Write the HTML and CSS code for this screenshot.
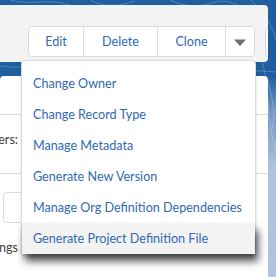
FILE: index.html
```html
<!DOCTYPE html>
<html lang="en">
<head>
    <meta charset="UTF-8">
    <meta name="viewport" content="width=device-width, initial-scale=1.0">
    <title>Record actions</title>
    <link rel="stylesheet" href="styles.css">
</head>
<body>
    <div class="page">
        <div class="highlights">
            <div class="btn-group">
                <button class="btn btn-edit">Edit</button>
                <button class="btn btn-delete">Delete</button>
                <button class="btn btn-clone">Clone</button>
                <button class="btn btn-icon" title="Show more actions">
                    <svg width="12" height="7" viewBox="0 0 12 7"><path d="M0 0.5 L12 0.5 L6.6 6.6 Q6 7.2 5.4 6.6 Z" fill="#706e6b"/></svg>
                </button>
            </div>
            <div class="btn-stub"></div>
        </div>

        <div class="card">
            <div class="card-head"></div>
            <div class="field-row">
                <div class="field-label"><span>Members:</span></div>
            </div>
            <div class="input-row">
                <div class="input"></div>
            </div>
            <div class="field-last">
                <div class="field-label"><span>Settings</span></div>
            </div>
        </div>

        <!-- overflow menu of the action bar -->
        <ul class="menu">
            <li class="menu-item">Change Owner</li>
            <li class="menu-item">Change Record Type</li>
            <li class="menu-item">Manage Metadata</li>
            <li class="menu-item">Generate New Version</li>
            <li class="menu-item">Manage Org Definition Dependencies</li>
            <li class="menu-item active">Generate Project Definition File</li>
        </ul>
    </div>
</body>
</html>
```
FILE: styles.css
```css
html, body {
    margin: 0;
    padding: 0;
}
body {
    font-family: Lato, "Open Sans", sans-serif;
    font-size: 12.6px;
    color: #3e3e3c;
    width: 276px;
    height: 277px;
    overflow: hidden;
    background-color: #b0c4df;
    background-image:
        url("data:image/svg+xml;utf8,<svg xmlns='http://www.w3.org/2000/svg' width='276' height='180' fill='none' stroke='white' stroke-opacity='0.22' stroke-width='1'><path d='M10 0 C30 6 50 -2 70 5'/><path d='M90 0 C105 8 120 6 135 1'/><path d='M170 0 C185 7 200 8 215 2 C225 -1 235 4 245 8'/><path d='M250 0 C262 10 270 20 276 40'/><path d='M262 60 C270 90 266 120 276 150'/><path d='M268 80 C272 100 276 110 272 130'/><path d='M0 66 C40 70 80 64 120 70 C160 74 200 66 276 72'/></svg>"),
        linear-gradient(#1f5fa0 0, #1f5fa0 75px, #6f95c6 110px, #b0c4df 170px);
    background-repeat: no-repeat;
}
.page {
    position: relative;
    padding-top: 5px;
}

/* action bar */
.highlights {
    width: 268px;
    height: 57px;
    box-sizing: border-box;
    padding: 21px 0 0 28px;
    background-color: #f3f3f3;
    border-radius: 0 4px 4px 0;
    display: flex;
    align-items: flex-start;
    overflow: hidden;
}
.btn-group {
    display: flex;
    height: 31px;
    box-sizing: border-box;
    border: 1px solid #dddbda;
    border-radius: 4px;
    background-color: #fff;
}
.btn {
    font-family: inherit;
    font-size: 12.6px;
    color: #3169b2;
    background: transparent;
    border: none;
    border-left: 1px solid #dddbda;
    padding: 0;
    height: 29px;
    line-height: 29px;
    cursor: pointer;
}
.btn:first-child {
    border-left: none;
}
.btn-edit {
    width: 54px;
}
.btn-delete {
    width: 74px;
}
.btn-clone {
    width: 68px;
}
.btn-icon {
    width: 29px;
    display: flex;
    align-items: center;
    justify-content: center;
    padding-top: 1px;
}
.btn-stub {
    flex: none;
    margin: 1px 0 0 10px;
    width: 20px;
    height: 29px;
    border: 1px solid #dddbda;
    border-radius: 4px;
    background-color: #f8f8f8;
}

/* record body */
.card {
    margin-top: 14px;
    width: 268px;
    height: 201px;
    background-color: #fff;
    border-radius: 4px 4px 0 0;
}
.card-head {
    height: 38px;
    border-bottom: 1px solid #dddbda;
}
.field-row {
    height: 42px;
    padding-top: 16px;
    border-bottom: 1px solid #dddbda;
    line-height: 18px;
}
.field-label {
    width: 18px;
    display: flex;
    justify-content: flex-end;
    overflow: hidden;
    white-space: nowrap;
}
.input-row {
    padding: 18px 0 0 3px;
}
.input {
    width: 200px;
    height: 31px;
    box-sizing: border-box;
    border: 1px solid #dddbda;
    border-radius: 4px;
}
.field-last {
    padding-top: 16px;
    line-height: 18px;
}

/* dropdown */
.menu {
    position: absolute;
    left: 21px;
    top: 60px;
    z-index: 2;
    width: 235px;
    box-sizing: border-box;
    margin: 0;
    padding: 7px 0 0;
    list-style: none;
    background-color: #fff;
    border: 1px solid #dddbda;
    border-radius: 4px;
    box-shadow: 0 2px 3px rgba(0, 0, 0, 0.16);
}
.menu-item {
    height: 31px;
    line-height: 31px;
    padding-left: 11px;
    color: #3169b2;
    white-space: nowrap;
    cursor: pointer;
}
.menu-item.active {
    background-color: #f3f3f3;
    box-shadow: 3px 7px 8px rgba(0, 0, 0, 0.7);
}
```
